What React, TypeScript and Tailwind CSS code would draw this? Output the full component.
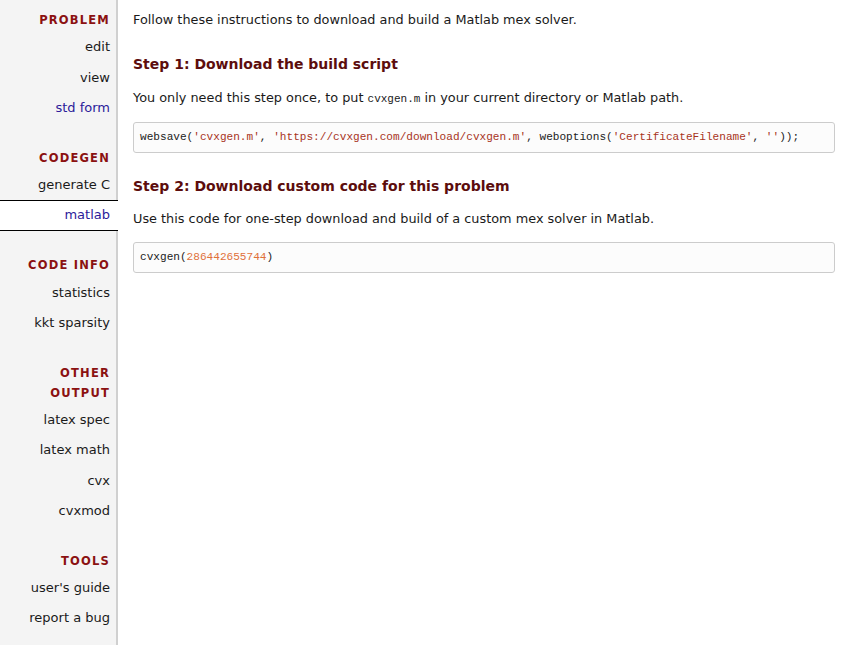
const sections: { title: string[]; items: { label: string; active?: boolean; link?: boolean }[] }[] = [
  {
    title: ['PROBLEM'],
    items: [{ label: 'edit' }, { label: 'view' }, { label: 'std form', link: true }],
  },
  {
    title: ['CODEGEN'],
    items: [{ label: 'generate C' }, { label: 'matlab', active: true, link: true }],
  },
  {
    title: ['CODE INFO'],
    items: [{ label: 'statistics' }, { label: 'kkt sparsity' }],
  },
  {
    title: ['OTHER', 'OUTPUT'],
    items: [{ label: 'latex spec' }, { label: 'latex math' }, { label: 'cvx' }, { label: 'cvxmod' }],
  },
  {
    title: ['TOOLS'],
    items: [{ label: "user's guide" }, { label: 'report a bug' }],
  },
];

const font = "font-['DejaVu_Sans',Verdana,sans-serif]";
const mono = "font-['Liberation_Mono',monospace]";

function Sidebar() {
  return (
    <div className="w-[118px] shrink-0 bg-[#f4f4f4] border-r-2 border-[#d0d0d0] pt-[10px] pb-4">
      {sections.map((s, i) => (
        <div key={i} className={i > 0 ? 'mt-[24.6px]' : ''}>
          <div className="pr-[6px] text-right text-[11.5px] font-bold tracking-[1.2px] text-[#8b1111] leading-[20px]">
            {s.title.map((t) => (
              <div key={t}>{t}</div>
            ))}
          </div>
          <div className="mt-[2.3px]">
            {s.items.map((it) => (
              <div
                key={it.label}
                className={`text-right text-[13px] h-[30.3px] ${
                  it.active ? 'bg-white border-y border-black leading-[28.3px] mr-[-2px] pr-[8px]' : 'pr-[6px] leading-[30.3px]'
                } ${it.link ? 'text-[#2b1b9a]' : 'text-[#1a1a1a]'}`}
              >
                {it.label}
              </div>
            ))}
          </div>
        </div>
      ))}
    </div>
  );
}

function CodeBox({ children }: { children: React.ReactNode }) {
  return (
    <div
      className={`mt-[14px] border border-[#cccccc] rounded-[3px] bg-[#fcfcfc] h-[31px] leading-[29px] px-[6px] text-[11.1px] text-[#222] whitespace-nowrap overflow-hidden ${mono}`}
    >
      {children}
    </div>
  );
}

const str = 'text-[#a8341c]';

export default function App() {
  return (
    <div className={`flex min-h-[645px] bg-white ${font}`}>
      <Sidebar />
      <div className="flex-1 pl-[15px] pr-[18px] pt-[11px] text-[12.85px] text-[#1a1a1a]">
        <p className="leading-[18px]">Follow these instructions to download and build a Matlab mex solver.</p>
        <h2 className="mt-[25px] text-[14px] font-bold text-[#5c0d0d] leading-[20px]">
          Step 1: Download the build script
        </h2>
        <p className="mt-[15px] leading-[18px]">
          You only need this step once, to put <span className={`${mono} text-[11px]`}>cvxgen.m</span> in your
          current directory or Matlab path.
        </p>
        <CodeBox>
          websave(<span className={str}>'cvxgen.m'</span>, <span className={str}>'https://cvxgen.com/download/cvxgen.m'</span>, weboptions(<span className={str}>'CertificateFilename'</span>, <span className={str}>''</span>));
        </CodeBox>
        <h2 className="mt-[23px] text-[14px] font-bold text-[#5c0d0d] leading-[20px]">
          Step 2: Download custom code for this problem
        </h2>
        <p className="mt-[14px] leading-[18px]">
          Use this code for one-step download and build of a custom mex solver in Matlab.
        </p>
        <CodeBox>
          cvxgen(<span className="text-[#e0703a]">286442655744</span>)
        </CodeBox>
      </div>
    </div>
  );
}
